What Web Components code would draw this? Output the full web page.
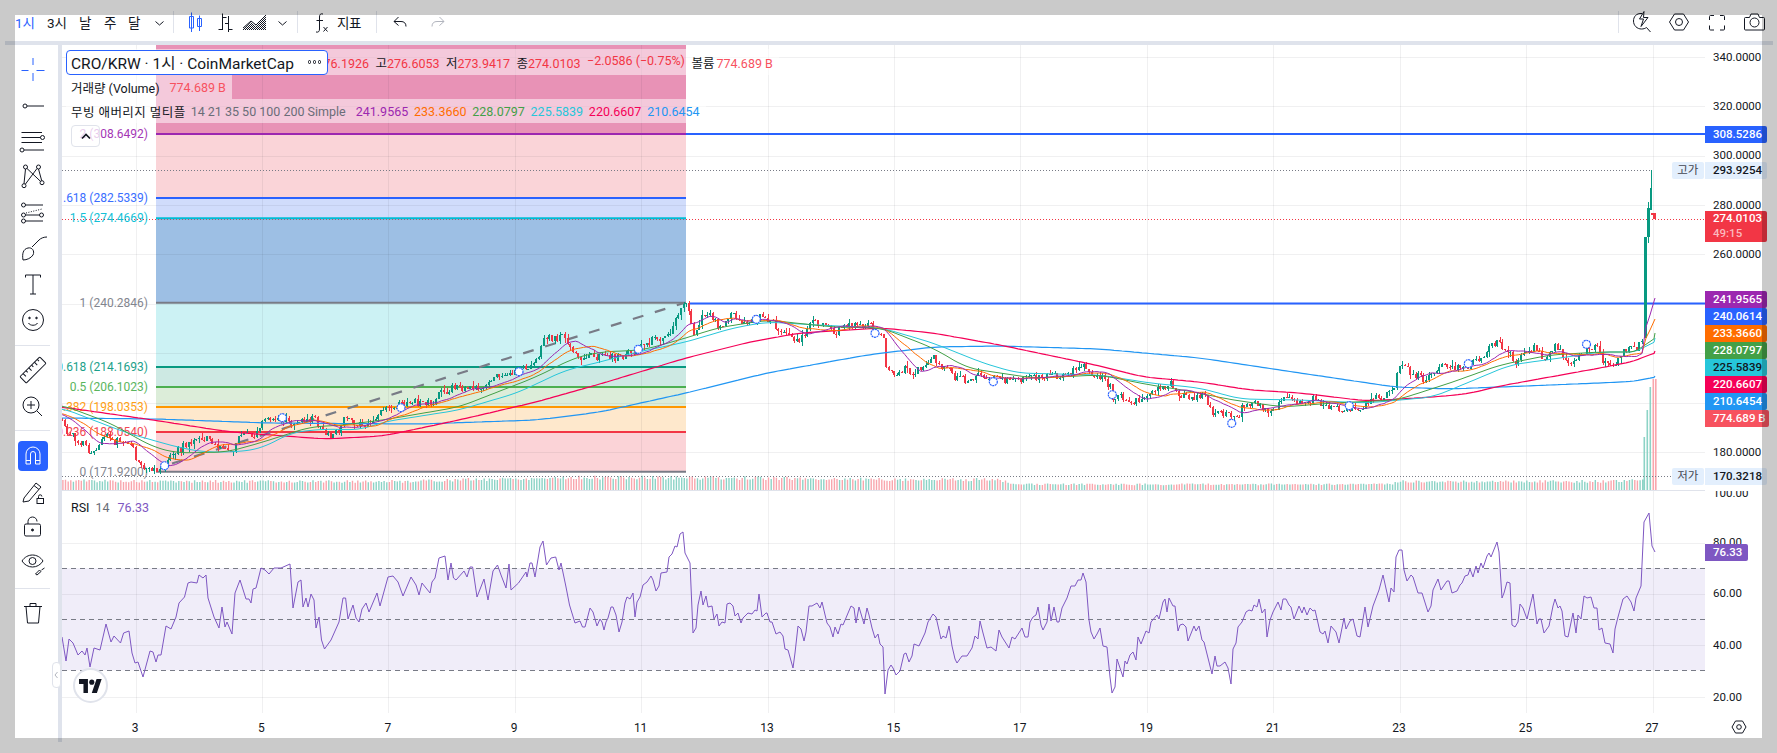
<!DOCTYPE html>
<html lang="ko">
<head>
<meta charset="utf-8">
<title>CRO/KRW</title>
<style>
  html, body { margin: 0; background: #fff; overflow: hidden; }
  body { width: 1777px; height: 753px; font-family: Roboto, "Noto Sans CJK KR", sans-serif; color: #131722; }
</style>
</head>
<body>
<tv-app>
  <tv-topbar slot="top"></tv-topbar>
  <tv-sidebar slot="side"></tv-sidebar>
  <tv-chart slot="chart"><tv-legend></tv-legend></tv-chart>
  <tv-price-axis slot="axis"></tv-price-axis>
  <tv-time-axis slot="time"></tv-time-axis>
  <tv-corner slot="corner"></tv-corner>
</tv-app>
<tv-frame></tv-frame>

<script>
(function (customElements) {
  const FONT = 'Roboto, "Noto Sans CJK KR", sans-serif';

  // price and rsi scales, page pixels
  const priceY = (p) => 56.7 + (340 - p) * 2.47;
  const rsiY = (v) => 696.7 - (v - 20) * 2.57;

  const CLOSE = [[40,412],[62,420],[65,430],[78,440],[92,453],[107,437],[124,445],[132,447],[136,458],[145,470],[159,470],[165,463],[187,443],[207,437],[214,445],[233,452],[237,437],[245,432],[254,437],[264,422],[279,420],[295,423],[312,417],[321,430],[327,437],[339,432],[344,420],[362,425],[377,418],[388,407],[409,403],[432,403],[438,393],[455,388],[475,387],[490,383],[497,373],[509,375],[532,365],[540,353],[543,338],[563,337],[570,348],[578,357],[597,357],[607,357],[620,358],[627,352],[638,349],[643,343],[660,338],[670,332],[680,307],[687,305],[693,335],[697,333],[702,313],[710,315],[720,327],[733,315],[743,325],[757,320],[760,312],[773,323],[787,333],[795,343],[803,337],[810,323],[823,322],[833,333],[850,325],[870,325],[882,338],[885,340],[887,378],[892,367],[897,377],[905,367],[912,375],[922,367],[933,355],[940,365],[950,365],[955,378],[970,379],[980,372],[988,378],[1000,378],[1013,382],[1030,378],[1050,377],[1067,373],[1085,365],[1093,377],[1103,378],[1112,388],[1113,402],[1120,395],[1123,403],[1137,402],[1143,397],[1160,387],[1172,383],[1178,393],[1190,397],[1203,395],[1212,413],[1232,417],[1237,418],[1243,407],[1257,402],[1270,412],[1283,398],[1297,400],[1317,400],[1322,405],[1333,407],[1342,409],[1363,407],[1377,398],[1393,393],[1398,365],[1405,367],[1410,373],[1428,380],[1438,368],[1460,368],[1477,362],[1488,350],[1498,340],[1503,352],[1510,347],[1513,362],[1533,347],[1543,358],[1555,348],[1572,362],[1582,353],[1595,345],[1605,365],[1615,368],[1623,348],[1635,350],[1642,338]];

  const MA_LINES = {
    '#26c6da': [[62,408],[93,420],[127,433],[177,447],[203,452],[233,452],[260,449],[293,432],[327,429],[360,430],[383,422],[459,410],[517,393],[566,370],[600,362],[633,353],[686,342],[733,328],[767,322],[817,325],[882,328],[933,343],[983,363],[1017,373],[1100,375],[1150,383],[1200,388],[1240,399],[1300,400],[1367,403],[1433,397],[1467,383],[1510,365],[1560,358],[1600,352],[1642,352],[1655,338]],
    '#43a047': [[62,405],[110,423],[153,447],[177,453],[227,452],[260,443],[310,427],[343,425],[383,420],[459,407],[536,377],[574,358],[600,352],[643,350],[686,338],[717,328],[767,320],[833,327],[882,328],[933,348],[967,368],[1033,378],[1100,375],[1150,385],[1183,390],[1233,400],[1283,407],[1333,403],[1397,400],[1450,383],[1500,365],[1550,355],[1600,352],[1642,352],[1655,333]],
    '#f50057': [[62,407],[153,420],[230,432],[325,439],[383,436],[459,420],[536,402],[600,384],[686,358],[750,342],[800,333],[882,328],[933,333],[1000,345],[1100,366],[1143,377],[1200,382],[1250,390],[1300,393],[1367,401],[1433,397],[1467,394],[1500,386],[1600,368],[1640,360],[1655,351]],
    '#2196f3': [[62,418],[156,419],[268,423],[421,424],[536,420],[600,412],[686,393],[767,373],[867,355],[933,347],[1000,346],[1100,349],[1200,358],[1300,373],[1395,387],[1450,389],[1500,387],[1600,383],[1640,381],[1655,376]],
  };

  const ALERTS = [[164.6,465.7],[282.4,417.7],[401,407.7],[519,371.7],[638.3,349.3],[756.3,319.3],[875,333.3],[993.3,381.7],[1112.3,394.7],[1231.7,423.3],[1349.3,405.7],[1468.3,363.7],[1586.5,344.3]];

  const RSI = [[62,637],[66,661],[69,639],[73,643],[78,655],[82,651],[85,655],[87,648],[90,667],[94,648],[100,650],[106,624],[111,642],[114,636],[120.5,643],[123.6,633],[129,631],[132,653],[135,663],[138,662],[143,677],[150,651],[153,652],[156,662],[158,655],[161,655],[166,626],[171,629],[176,617],[179,603],[184.5,597],[188,583],[191,582],[197,583],[199,575],[203,578],[206,575],[208,598],[214,617],[219,628],[222,607],[225,627],[227,622],[232,634],[235,593],[240,580],[246,599],[249,599],[251,603],[253,589],[256,588],[261,568],[265,570],[269,574],[274,568],[281,568],[290,564],[293,608],[298,582],[301,580],[303,607],[306,598],[308,607],[311,594],[314,600],[316,628],[319,617],[321.5,640],[324.5,649],[331,640],[339,622],[343,598],[345.6,598],[348,619],[353,605],[356,618],[359,622],[362,609],[366,603],[369,612],[377,593],[380,606],[388,577],[393,576],[398,582],[403,596],[411,577],[416,585],[419,595],[422,583],[430,593],[432,582],[435,578],[439,558],[445,556],[448,580],[451,563],[453.5,578],[456,580],[464,571],[467,577],[470,567],[472.6,567],[477,597],[484,579],[488,600],[493,571],[497.5,565],[501,575],[506,588],[509,564],[511,590],[518.5,583],[526,572],[527,577],[530,563],[532,563],[535,577],[540,547],[543,541],[546.5,565],[551,558],[555.7,557],[559,570],[561,563],[566,587],[569.5,605],[575,623],[580,621],[582.5,627],[585,627],[590,608],[593,612],[597,626],[600,619],[602,622],[604,630],[606,622],[608,618],[611,607],[613,607],[616,615],[619,632],[622,622],[625,603],[627,597],[630,599],[633,593],[635,617],[637,602],[640,597],[643,585],[647,582],[651,576],[653,580],[656,591],[659,586],[661,573],[667,572],[669,557],[672,554],[675,546],[677,547],[680,534],[683,532],[685,553],[690,563],[693,633],[696,628],[698,605],[701,591],[703,605],[706,596],[708,607],[712,606],[714,619],[717,614],[719,626],[722,622],[725,623],[727,604],[730,603],[733,606],[735,616],[738,613],[741,623],[743,618],[748,613],[752,614],[755,610],[757,611],[759,594],[762,617],[766,613],[767,613],[770,622],[772,622],[776,634],[780,632],[783,636],[785,649],[788,650],[793,668],[795,653],[798,626],[801,629],[804,641],[806,632],[809,606],[812,606],[817,603],[820,608],[822,602],[827,623],[830,627],[833,637],[835,627],[838,634],[841,624],[843,625],[851,606],[854,608],[856,623],[859,607],[864,624],[867,608],[869,615],[872,628],[875,638],[878,634],[880,644],[883,647],[885,694],[888,670],[891,665],[893,668],[896,675],[900,671],[904,654],[906,653],[909,662],[912,656],[914,644],[919,646],[925,633],[928,622],[933,614],[936,617],[941,639],[943,636],[946,638],[949,626],[952,646],[955,659],[957,663],[962,656],[967,656],[972,648],[975,636],[978,639],[980,621],[983,633],[987,648],[991,647],[996,651],[999,630],[1002,637],[1009,648],[1012,637],[1015,639],[1022,628],[1025,637],[1028,637],[1030,622],[1033,617],[1036,615],[1038,607],[1041,625],[1043,630],[1047,622],[1049,604],[1051,621],[1054,607],[1057,622],[1059,622],[1062,608],[1067,598],[1071,586],[1075,586],[1078,580],[1081,580],[1083,573],[1086,582],[1089,620],[1091,632],[1094,639],[1097,634],[1100,628],[1103,646],[1107,647],[1110,677],[1112,693],[1115,687],[1117,659],[1123,677],[1125,661],[1127,664],[1130,655],[1133,652],[1136,660],[1138,637],[1141,644],[1146,631],[1149,633],[1151,622],[1157,615],[1159,619],[1163,602],[1165,599],[1167,612],[1169,598],[1173,606],[1175,606],[1178,631],[1180,625],[1183,624],[1186,627],[1188,641],[1194,626],[1196,631],[1199,626],[1202,640],[1204,642],[1212,674],[1215,656],[1217,666],[1220,666],[1225,662],[1228,668],[1231,684],[1233,649],[1236,643],[1238,627],[1242,622],[1246,612],[1249,610],[1252,611],[1254,605],[1257,607],[1259,599],[1262,613],[1265,609],[1267,637],[1270,620],[1273,612],[1278,602],[1281,610],[1283,599],[1286,599],[1289,605],[1291,607],[1294,619],[1299,606],[1302,613],[1304,607],[1307,615],[1310,608],[1313,611],[1315,610],[1318,623],[1320,632],[1323,634],[1325,631],[1328,643],[1331,626],[1336,632],[1339,643],[1344,618],[1346,629],[1350,621],[1353,619],[1357,636],[1360,637],[1365,607],[1368,627],[1373,606],[1379,590],[1383,575],[1389,602],[1391,588],[1394,592],[1396,557],[1399,550],[1402,550],[1404,570],[1407,581],[1411,575],[1413,577],[1418,593],[1422,593],[1428,612],[1431,606],[1433,590],[1438,579],[1441,590],[1447,581],[1449,581],[1452,593],[1457,591],[1460,585],[1462,583],[1465,576],[1468,575],[1470,569],[1473,577],[1476,566],[1478,573],[1481,563],[1483,568],[1487,556],[1489,553],[1491,557],[1497,542],[1499,552],[1502,598],[1504,593],[1507,582],[1510,583],[1512,625],[1515,627],[1518,622],[1520,604],[1523,608],[1527,619],[1533,594],[1537,624],[1539,619],[1541,619],[1544,633],[1549,626],[1553,606],[1555,599],[1558,608],[1560,606],[1562,611],[1565,636],[1568,637],[1573,613],[1576,633],[1578,615],[1581,619],[1584,596],[1587,598],[1591,597],[1594,608],[1597,608],[1599,630],[1602,628],[1605,643],[1610,644],[1613,653],[1615,629],[1618,617],[1623,599],[1627,596],[1631,602],[1634,611],[1636,598],[1641,586],[1644,522],[1649,513],[1652,546],[1655,552]];

  const VOLUME = [[62,10],[156,9],[400,9],[470,11],[560,13],[690,13],[800,12],[900,11],[1000,11],[1010,6],[1100,6],[1390,6],[1400,9],[1600,9],[1635,10],[1642,11]];

  const FIB = [
    { y: 134, c: '#9c27b0', t: '2 (308.6492)' },
    { y: 198, c: '#2962ff', t: '1.618 (282.5339)' },
    { y: 218.3, c: '#00bcd4', t: '1.5 (274.4669)' },
    { y: 302.7, c: '#787b86', t: '1 (240.2846)' },
    { y: 367, c: '#089981', t: '0.618 (214.1693)' },
    { y: 387, c: '#4caf50', t: '0.5 (206.1023)' },
    { y: 407, c: '#ff9800', t: '0.382 (198.0353)' },
    { y: 432, c: '#f23645', t: '0.236 (188.0540)' },
    { y: 471.7, c: '#787b86', t: '0 (171.9200)' },
  ];
  const ZONES = [[45,134,'#e892b6'],[134,198,'#fad4d8'],[198,218.3,'#d0dcfb'],[218.3,302.7,'#9dbfe4'],[302.7,367,'#ccf2f4'],[367,387,'#cde9e3'],[387,407,'#dcedd9'],[407,432,'#fee8cc'],[432,471.7,'#fbd3d7']];

  const interp = (pts, x) => {
    if (x <= pts[0][0]) return pts[0][1];
    for (let i = 1; i < pts.length; i++) {
      if (x <= pts[i][0]) {
        const [x0, y0] = pts[i - 1];
        const [x1, y1] = pts[i];
        return y0 + (y1 - y0) * (x - x0) / (x1 - x0);
      }
    }
    return pts[pts.length - 1][1];
  };

  const rng = (seed) => () => {
    seed = (seed + 0x6d2b79f5) | 0;
    let t = Math.imul(seed ^ (seed >>> 15), 1 | seed);
    t = (t + Math.imul(t ^ (t >>> 7), 61 | t)) ^ t;
    return ((t ^ (t >>> 14)) >>> 0) / 4294967296;
  };

  const buildCandles = () => {
    const rand = rng(77);
    const step = 2.633;
    const list = [];
    const closes = [];
    for (let x = 1642 - step * 640; x < 1643; x += step) {
      closes.push({ x, y: interp(CLOSE, x) + (x < 62 ? 0 : (rand() - 0.5) * 8) });
    }
    for (let i = 1; i < closes.length; i++) {
      const { x, y } = closes[i];
      if (x < 60) continue;
      const open = closes[i - 1].y;
      list.push({
        x, o: open, c: y,
        hi: Math.min(open, y) - rand() * rand() * 6,
        lo: Math.max(open, y) + rand() * rand() * 6,
      });
    }
    return { list, closes };
  };

  const sma = (closes, n) => {
    const out = [];
    for (let i = n; i < closes.length; i++) {
      if (closes[i].x < 60) continue;
      let sum = 0;
      for (let k = 0; k < n; k++) sum += closes[i - k].y;
      out.push([closes[i].x, sum / n]);
    }
    return out;
  };

  const smooth = (pts) => {
    const out = [];
    for (let x = pts[0][0]; x <= pts[pts.length - 1][0]; x += 4) {
      let sum = 0;
      for (let k = -3; k <= 3; k++) sum += interp(pts, x + k * 4);
      out.push([x, sum / 7]);
    }
    out.push(pts[pts.length - 1]);
    return out;
  };

  const toPath = (pts) => 'M' + pts.map((p) => p[0].toFixed(1) + ' ' + p[1].toFixed(1)).join('L');

  const chartSvg = () => {
    const { list, closes } = buildCandles();
    const rand = rng(5);
    let greenBody = '', redBody = '', greenVol = '', redVol = '';
    list.forEach((b) => {
      const x = Math.round(b.x);
      const top = Math.min(b.o, b.c);
      const bot = Math.max(Math.max(b.o, b.c), top + 1);
      const seg = `M${x} ${b.hi.toFixed(1)}h1V${b.lo.toFixed(1)}h-1zM${x - 1} ${top.toFixed(1)}h2V${bot.toFixed(1)}h-2z`;
      const h = interp(VOLUME, b.x) * (0.8 + rand() * 0.3);
      const vol = `M${b.x.toFixed(1)} ${(490 - h).toFixed(1)}h1.4V490h-1.4z`;
      if (b.c <= b.o) { greenBody += seg; greenVol += vol; } else { redBody += seg; redVol += vol; }
    });
    // the last hours are read bar by bar
    greenBody += 'M1644 237h3V338h-3zM1647 208h3V237h-3zM1648 202h1V243h-1zM1650 188h2V210h-2zM1650.5 170h1V190h-1z';
    redBody += 'M1651 213h4v2h-4zM1653 213h2.5v6h-2.5z';
    greenVol += 'M1643.5 437h1.6V490h-1.6zM1646.5 410h1.6V490h-1.6zM1649.5 387h1.6V490h-1.6z';
    redVol += 'M1652.5 379h1.6V490h-1.6zM1655 379h1.6V490h-1.6z';

    const purple = sma(closes, 14);
    const orange = sma(closes, 21);
    purple.push([1646, 327], [1650, 315], [1655, 298]);
    orange.push([1646, 338], [1650, 330], [1655, 319]);

    let grid = '';
    for (let x = 135.5; x < 1700; x += 126.42) {
      grid += `<path d="M${Math.round(x) + 0.5} 45V713"/>`;
    }
    [340, 320, 300, 280, 260, 240, 220, 200, 180].forEach((p) => {
      grid += `<path d="M62 ${Math.round(priceY(p)) + 0.5}H1705"/>`;
    });
    [80, 60, 40, 20].forEach((v) => {
      grid += `<path d="M62 ${Math.round(rsiY(v)) + 0.5}H1705"/>`;
    });

    return `
    <svg xmlns="http://www.w3.org/2000/svg" width="1643" height="668" viewBox="62 45 1643 668">
      ${ZONES.map((z) => `<rect x="156" y="${z[0]}" width="530" height="${z[1] - z[0]}" fill="${z[2]}"/>`).join('')}
      <rect x="62" y="568.3" width="1643" height="102" fill="#f0edf9"/>
      <g stroke="rgba(42,46,57,.07)" stroke-width="1" fill="none">${grid}</g>
      <path d="M62 490.5H1705" stroke="#e0e3eb"/>
      <path d="${greenVol}" fill="#8cd3c6"/>
      <path d="${redVol}" fill="#f9a6ad"/>
      <path d="M62 170.5H1650M62 476.5H1705" stroke="#787b86" stroke-dasharray="1 2" fill="none"/>
      <path d="M62 219.5H1705" stroke="#f23645" stroke-dasharray="1 2" fill="none"/>
      <g stroke-width="2" fill="none">
        ${FIB.map((f) => `<path d="M156 ${f.y}H686" stroke="${f.c}"/>`).join('')}
        <path d="M686 134H1705M690 303.5H1705" stroke="#2962ff"/>
      </g>
      <g font-family='${FONT}' font-size="12" text-anchor="end">
        ${FIB.map((f) => `<text x="148" y="${f.y + 4}" fill="${f.c}" opacity=".92">${f.t}</text>`).join('')}
      </g>
      <path d="M172 463.5L684 303" stroke="#787b86" stroke-width="2.2" stroke-dasharray="11 12" fill="none"/>
      <g shape-rendering="crispEdges">
        <path d="${greenBody}" fill="#089981"/>
        <path d="${redBody}" fill="#f23645"/>
      </g>
      <g fill="none" stroke-width="1" stroke-linejoin="round">
        <path d="${toPath(smooth(MA_LINES['#2196f3']))}" stroke="#2196f3" stroke-width="1.2"/>
        <path d="${toPath(smooth(MA_LINES['#f50057']))}" stroke="#f50057" stroke-width="1.2"/>
        <path d="${toPath(smooth(MA_LINES['#26c6da']))}" stroke="#26c6da"/>
        <path d="${toPath(smooth(MA_LINES['#43a047']))}" stroke="#43a047"/>
        <path d="${toPath(orange)}" stroke="#ff6d00"/>
        <path d="${toPath(purple)}" stroke="#9c27b0"/>
      </g>
      ${ALERTS.map((a) => `<circle cx="${a[0]}" cy="${a[1]}" r="4" fill="#fff" stroke="#2962ff" stroke-width="1.2" stroke-dasharray="2 .6"/>`).join('')}
      <path d="M62 568.5H1705M62 619.5H1705M62 670.5H1705" stroke="#787b86" stroke-dasharray="5 4" fill="none"/>
      <path d="${toPath(RSI)}" fill="none" stroke="#7e57c2" stroke-width="1" stroke-linejoin="round"/>
    </svg>`;
  };

  class TvApp extends HTMLElement {
    connectedCallback() {
      this.attachShadow({ mode: 'open' }).innerHTML = `
      <style>
        :host { display: block; width: 1777px; height: 753px; padding-top: 15px; box-sizing: border-box; font-family: ${FONT}; }
        .top { margin-left: 15px; }
        .band { height: 4px; margin: 0 4px 0 5px; background: #dfe3ec; }
        .row { display: flex; margin-left: 15px; height: 693px; }
        .side { width: 43px; }
        .vband { width: 4px; height: 697px; background: #dfe3ec; }
        .main { display: grid; grid-template-columns: 1643px 62px; grid-template-rows: 668px 25px; }
      </style>
      <div class="top"><slot name="top"></slot></div>
      <div class="band"></div>
      <div class="row">
        <div class="side"><slot name="side"></slot></div>
        <div class="vband"></div>
        <div class="main">
          <slot name="chart"></slot>
          <slot name="axis"></slot>
          <slot name="time"></slot>
          <slot name="corner"></slot>
        </div>
      </div>`;
    }
  }

  class TvTopbar extends HTMLElement {
    connectedCallback() {
      const chev = (ml) => `<svg style="margin-left:${ml}px" width="9" height="26" viewBox="0 0 9 26" fill="none" stroke="#131722"><path d="M.5 6.5l4 3.5 4-3.5"/></svg>`;
      const icon = (ml, w, body) => `<svg style="margin-left:${ml}px" width="${w}" height="26" viewBox="0 0 ${w} 26" fill="none" stroke="#131722">${body}</svg>`;
      this.attachShadow({ mode: 'open' }).innerHTML = `
      <style>
        :host { display: flex; align-items: flex-start; height: 26px; width: 1750px; font: 13.5px ${FONT}; color: #131722; white-space: nowrap; }
        .cell { display: block; line-height: 26px; margin-top: -5px; }
        svg { display: block; flex: none; overflow: visible; }
        .sep { width: 1px; height: 22px; background: #e0e3eb; margin-top: -4px; flex: none; }
        .active { color: #2962ff; }
      </style>
      <span class="cell active" style="width:18px">1시</span>
      <span class="cell" style="margin-left:14px;width:19px">3시</span>
      <span class="cell" style="margin-left:13px;width:13px">날</span>
      <span class="cell" style="margin-left:12px;width:13px">주</span>
      <span class="cell" style="margin-left:11px;width:13px">달</span>
      ${chev(14)}
      <div class="sep" style="margin-left:9px"></div>
      ${icon(14, 16, '<path stroke="#2962ff" d="M3.5-2.5V17M11.5 .5V16M1.5 1.5h4v11.5h-4zM9.5 3.5h4v8h-4z"/>')}
      ${icon(14, 15, '<path d="M4.5-1.5v16.5M.5 14.5h4M4.5 2.5h4M10.5 1v16M7 8.5h3.5M10.5 14.5H14.5"/>')}
      ${icon(10, 23, `<defs><pattern id="hatch" width="2" height="2" patternUnits="userSpaceOnUse"><path d="M0 0h1v1H0zM1 1h1v1H1z" fill="#131722" stroke="none"/></pattern></defs><path d="M0 14l8-7 5 4 10-10v14H0z" fill="url(#hatch)" stroke="none"/><path d="M0 13l8-7 5 4 10-10"/>`)}
      ${chev(12)}
      <div class="sep" style="margin-left:10px"></div>
      ${icon(16, 14, '<path d="M9 -1C6.5 -1.7 5.5 -.5 5.5 2v12c0 2.5-1 3.5-3.5 3M2.5 5.500H9M9.5 12l4 4.5M13.5 12l-4 4.5"/>')}
      <span class="cell" style="margin-left:9px;width:25px;letter-spacing:-.5px">지표</span>
      <div class="sep" style="margin-left:14px"></div>
      ${icon(16, 14, '<path d="M5.5 2L1 6.5l4.5 4M1 6.5h7c3 0 5 1.5 5 5"/>')}
      ${icon(24, 14, '<path stroke="#b2b5be" d="M8.5 2L13 6.5l-4.5 4M13 6.5H6c-3 0-5 1.500-5 5"/>')}
      <div class="sep" style="margin-left:auto"></div>
      ${icon(14, 18, '<path d="M9 -1.500C3 -2 .5 2 .5 6c0 4.5 3.5 8 8 8 2 0 3.500-.5 5-1.500M13.5 12.5L17.5 17M11-3.500L6.5 4h4L8 11.500l7-9h-4.500z"/>')}
      ${icon(18, 20, '<path d="M5.5-1h9l5 8-5 8h-9l-5-8z"/><circle cx="10" cy="7" r="3.5"/>')}
      ${icon(20, 16, '<path d="M.5 5V1.500a1 1 0 0 1 1-1H5M11 .5h3.500a1 1 0 0 1 1 1V5M15.500 10.500V14a1 1 0 0 1-1 1H11M5 15H1.500a1 1 0 0 1-1-1v-3.500"/>')}
      ${icon(19, 21, '<path d="M.5 3.500a1 1 0 0 1 1-1h4L7-1h7l1.500 3.500h4a1 1 0 0 1 1 1v10.500a1 1 0 0 1-1 1h-18a1 1 0 0 1-1-1z"/><circle cx="10.5" cy="7.5" r="4.5"/>')}
      `;
    }
  }

  const TOOLS = [
    `<path stroke="#2962ff" d="M3.5 15.5h7M18.5 15.5h8M15 3v7M15 18v8"/>`,
    `<circle cx="7" cy="15" r="2"/><path d="M9 15h17"/>`,
    `<path d="M3.5 6.5H24M3.5 11.5H22.5M3.5 16.5H24M6 24H26"/><circle cx="24.5" cy="11.5" r="2"/><circle cx="4" cy="24" r="2"/>`,
    `<path d="M7.5 7L6 21.7M9 6.5L22.7 19.5M19 6.500L7.5 22M20.5 7L23.7 18.7"/><circle cx="7.5" cy="5" r="2"/><circle cx="20.5" cy="5" r="2"/><circle cx="24" cy="20.7" r="2"/><circle cx="6" cy="23.7" r="2"/>`,
    `<path d="M7.5 7H25M7.5 17H21.500M7.5 23H25"/><path d="M8 15L24 11" stroke-dasharray="1 1.5"/><circle cx="5.5" cy="7" r="2"/><circle cx="5.5" cy="17" r="2"/><circle cx="23.5" cy="17" r="2"/><circle cx="5.5" cy="23" r="2"/>`,
    `<path d="M5 27c-1-6 0-11 5-12 4-1 7 3 5 7-2 3-6 5-10 5zM14 14l7-7c2-2 5-3 8-3"/>`,
    `<path d="M7.5 8.5V6h15v2.5M15 6v19M12 25h6"/>`,
    `<circle cx="15" cy="15" r="10.5"/><circle cx="11.5" cy="13" r=".8" fill="#131722"/><circle cx="18.5" cy="13" r=".8" fill="#131722"/><path d="M10.5 18c1.5 3 7.5 3 9 0"/>`,
    'sep',
    `<g transform="rotate(-45 15 15)"><rect x="1" y="10.5" width="28" height="9" rx="1"/><path d="M5.5 10.5v4M9.5 10.5v2.5M13.5 10.5v4M17.5 10.5v2.5M21.5 10.5v4M25.5 10.5v2.5"/></g>`,
    `<circle cx="13" cy="14" r="8"/><path d="M13 10v8M9 14h8M19 20l5 5"/>`,
    'sep',
    'magnet',
    `<path d="M6 22L18 7l5 4-12 14-6 1zM16 9.5l5 4"/><rect x="19" y="22.5" width="6.5" height="5" fill="#fff"/><path d="M20.5 22.5v-2a1.7 1.7 0 0 1 3.4 0"/>`,
    `<rect x="6.5" y="12" width="16" height="12" rx="1.5"/><path d="M10 12V9.5a4.5 4.5 0 0 1 9 0"/><circle cx="14.5" cy="18" r="1" fill="#131722"/>`,
    `<path d="M4 13c5-8 16-8 21 0-5 8-16 8-21 0z"/><circle cx="14.5" cy="13" r="3.5"/><path d="M17.5 26l4-4 1.5 1.5-4 3.5zM23.5 22l3-2"/>`,
    'sep',
    `<path d="M6 8.500h18M12 8.500V5.500h6v3M8 8.500l1.500 16.500h11L22 8.500"/>`,
  ];

  class TvSidebar extends HTMLElement {
    connectedCallback() {
      const rows = TOOLS.map((t) => {
        if (t === 'sep') return '<div class="sep"></div>';
        if (t === 'magnet') {
          return `<div class="tool"><div class="on"><svg width="30" height="30" viewBox="0 0 30 30" fill="none" stroke="#fff"><path d="M8 23V13a7 7 0 0 1 14 0v10h-4.5V13a2.5 2.5 0 0 0-5 0v10zM8 19.5h4.5M17.5 19.5H22"/></svg></div></div>`;
        }
        return `<div class="tool"><svg width="30" height="30" viewBox="0 0 30 30" fill="none" stroke="#131722">${t}</svg></div>`;
      }).join('');
      this.attachShadow({ mode: 'open' }).innerHTML = `
      <style>
        :host { display: block; padding-top: 7px; box-sizing: border-box; }
        .tool { height: 35.7px; display: flex; align-items: center; padding-left: 2.5px; }
        .sep { height: 1px; width: 35px; background: #e0e3eb; margin: 7px 0 6.5px; }
        .on { width: 30px; height: 30px; background: #2962ff; border-radius: 4px; }
        svg { display: block; overflow: visible; }
      </style>${rows}`;
    }
  }

  class TvChart extends HTMLElement {
    connectedCallback() {
      this.attachShadow({ mode: 'open' }).innerHTML = `
      <style>
        :host { display: block; position: relative; width: 1643px; height: 668px; }
        svg { display: block; }
        .overlay { position: absolute; left: 0; top: 0; right: 0; bottom: 0; }
        .rsi { position: absolute; left: 9px; top: 454px; font-size: 12.5px; line-height: 17px; color: #131722; white-space: pre; }
        .rsi i { font-style: normal; color: #6a6d78; margin-left: 6px; }
        .rsi b { font-weight: 400; color: #7e57c2; margin-left: 8px; }
        .handle { position: absolute; left: -10px; top: 617px; width: 7px; height: 24px; background: #fff; border: 1px solid #e0e3eb; border-radius: 4px; }
        .logo { position: absolute; left: 11px; top: 623px; width: 31px; height: 31px; background: #fff; border: 2px solid #e0e3eb; border-radius: 50%; display: flex; align-items: center; justify-content: center; }
      </style>
      ${chartSvg()}
      <div class="overlay"><slot></slot></div>
      <div class="rsi">RSI<i>14</i><b>76.33</b></div>
      <div class="handle"><svg width="7" height="24" viewBox="0 0 7 24" fill="none" stroke="#b2b5be"><path d="M4.5 9L2 12l2.5 3"/></svg></div>
      <div class="logo"><svg width="23" height="18" viewBox="0 0 36 28" fill="#131722"><path d="M14 25H7V11H0V3h14zM28 25h-8l7.5-22h8z"/><circle cx="20" cy="8" r="4"/></svg></div>`;
    }
  }

  class TvLegend extends HTMLElement {
    connectedCallback() {
      this.attachShadow({ mode: 'open' }).innerHTML = `
      <style>
        :host { display: inline-flex; flex-direction: column; align-items: flex-start; margin: 4px 0 0 4px; font: 12.5px ${FONT}; color: #131722; white-space: nowrap; }
        .row { display: flex; align-items: center; height: 24px; background: rgba(255,255,255,.5); padding: 0 6px 0 5px; }
        .first { height: 26px; padding: 0 6px 0 0; }
        .title { position: relative; z-index: 1; box-sizing: border-box; width: 262px; height: 25px; display: flex; align-items: center; justify-content: space-between; padding: 0 6px 0 4px; border: 1px solid #2962ff; border-radius: 4px; background: #fff; font-size: 15.5px; }
        .dots { display: flex; gap: 1.5px; }
        .dots i { width: 3.5px; height: 3.5px; border: 1px solid #131722; border-radius: 50%; box-sizing: border-box; }
        .ohlc { margin-left: -23px; display: flex; gap: 6.5px; }
        .red { color: #f23645; }
        .name { letter-spacing: .45px; }
        .gray { color: #6a6d78; margin-left: 5px; }
        .vol { color: #f7525f; margin-left: 10px; }
        .val { margin-left: 5.8px; }
        .collapse { box-sizing: border-box; width: 29px; height: 22px; margin: 2px 0 0 5px; background: rgba(255,255,255,.75); border: 1px solid #e0e3eb; border-radius: 4px; display: flex; align-items: center; justify-content: center; }
      </style>
      <div class="row first">
        <div class="title"><span>CRO/KRW · 1시 · CoinMarketCap</span><span class="dots"><i></i><i></i><i></i></span></div>
        <div class="ohlc">
          <span>시<span class="red">276.1926</span></span>
          <span>고<span class="red">276.6053</span></span>
          <span>저<span class="red">273.9417</span></span>
          <span>종<span class="red">274.0103</span></span>
          <span class="red">−2.0586 (−0.75%)</span>
          <span>볼륨<span class="vol" style="margin-left:2px">774.689 B</span></span>
        </div>
      </div>
      <div class="row"><span>거래량 (Volume)</span><span class="vol">774.689 B</span></div>
      <div class="row">
        <span class="name">무빙 애버리지 멀티플</span><span class="gray">14 21 35 50 100 200 Simple</span>
        <span class="val" style="color:#9c27b0;margin-left:10px">241.9565</span>
        <span class="val" style="color:#ff6d00">233.3660</span>
        <span class="val" style="color:#43a047">228.0797</span>
        <span class="val" style="color:#26c6da">225.5839</span>
        <span class="val" style="color:#f50057">220.6607</span>
        <span class="val" style="color:#2196f3">210.6454</span>
      </div>
      <div class="collapse"><svg width="12" height="8" viewBox="0 0 12 8" fill="none" stroke="#131722" stroke-width="1.7"><path d="M2 6.5l4-4 4 4"/></svg></div>`;
    }
  }

  class TvPriceAxis extends HTMLElement {
    connectedCallback() {
      const top = (y) => y - 45;
      const ticks = [[340, 56.7], [320, 106], [300, 155.3], [280, 205], [260, 253.5], [180, 451.7]]
        .map(([p, y]) => `<div class="tick" style="top:${top(y) - 8}px">${p.toFixed(4)}</div>`).join('');
      const rsiTicks = [[100, 492.6], [80, 542.3], [60, 593.3], [40, 645.3], [20, 696.7]]
        .map(([v, y]) => `<div class="tick" style="top:${y - 491 - 8}px">${v.toFixed(2)}</div>`).join('');
      const tag = (y, bg, text, color = '#fff', w = 62) =>
        `<div class="tag" style="top:${top(y)}px;background:${bg};color:${color};width:${w}px">${text}</div>`;
      this.attachShadow({ mode: 'open' }).innerHTML = `
      <style>
        :host { display: block; position: relative; width: 62px; height: 668px; font: 11.5px ${FONT}; color: #131722; white-space: nowrap; }
        .pane { position: absolute; left: 0; right: 0; overflow: hidden; }
        .rsi { top: 446px; height: 222px; }
        .tick { position: absolute; left: 8px; line-height: 17px; }
        .tag { position: absolute; left: 0; box-sizing: border-box; padding-left: 8px; height: 17px; line-height: 17px; border-radius: 0 2px 2px 0; font-weight: 500; }
        .side { position: absolute; left: -33px; box-sizing: border-box; width: 31.5px; height: 17px; line-height: 17px; text-align: center; background: #e3effd; border-radius: 2px; color: #434651; }
        .tall { height: 31px; line-height: 15px; }
        .tall i { display: block; font-style: normal; color: #fbb9be; }
        .rsi-tag { position: absolute; left: 0; top: ${544 - 491}px; width: 43px; height: 17px; line-height: 17px; box-sizing: border-box; padding-left: 8px; background: #7e57c2; color: #fff; border-radius: 0 2px 2px 0; font-weight: 500; }
      </style>
      ${ticks}
      ${tag(126, '#2962ff', '308.5286')}
      ${tag(162, '#e3effd', '293.9254', '#131722').replace('font-weight', 'x')}
      <div class="side" style="top:${top(162)}px">고가</div>
      <div class="tag tall" style="top:${top(211)}px;background:#f23645;color:#fff;width:62px">274.0103<i>49:15</i></div>
      ${tag(291, '#9c27b0', '241.9565')}
      ${tag(308, '#2962ff', '240.0614')}
      ${tag(325, '#ff6d00', '233.3660')}
      ${tag(342, '#43a047', '228.0797')}
      ${tag(359, '#26c6da', '225.5839', '#131722')}
      ${tag(376, '#f50057', '220.6607')}
      ${tag(393, '#2196f3', '210.6454')}
      ${tag(410, '#f7525f', '774.689 B', '#fff', 64)}
      ${tag(468, '#e3effd', '170.3218', '#131722')}
      <div class="side" style="top:${top(468)}px">저가</div>
      <div class="pane rsi">${rsiTicks}<div class="rsi-tag">76.33</div></div>`;
    }
  }

  class TvTimeAxis extends HTMLElement {
    connectedCallback() {
      const labels = [3, 5, 7, 9, 11, 13, 15, 17, 19, 21, 23, 25, 27].map((d) => `<span>${d}</span>`).join('');
      this.attachShadow({ mode: 'open' }).innerHTML = `
      <style>
        :host { display: flex; height: 25px; padding-left: 9.8px; font: 12px ${FONT}; color: #131722; overflow: hidden; }
        span { flex: 0 0 126.42px; text-align: center; line-height: 30px; }
      </style>${labels}`;
    }
  }

  class TvCorner extends HTMLElement {
    connectedCallback() {
      this.attachShadow({ mode: 'open' }).innerHTML = `
      <style>
        :host { display: flex; height: 25px; padding: 7px 0 0 26px; box-sizing: border-box; }
      </style>
      <svg width="16" height="14" viewBox="0 0 16 14" fill="none" stroke="#131722"><path d="M4.5 1h7L15 7l-3.5 6h-7L1 7z"/><circle cx="8" cy="7" r="2.3"/></svg>`;
    }
  }

  // screenshot grey sits over the page edge, the tags show through it
  class TvFrame extends HTMLElement {
    connectedCallback() {
      this.attachShadow({ mode: 'open' }).innerHTML = `
      <style>
        :host { position: fixed; left: 0; top: 0; width: 1777px; height: 753px; box-sizing: border-box; border: 15px solid rgba(0,0,0,.208); pointer-events: none; }
      </style>`;
    }
  }

  customElements.define('tv-app', TvApp);
  customElements.define('tv-topbar', TvTopbar);
  customElements.define('tv-sidebar', TvSidebar);
  customElements.define('tv-chart', TvChart);
  customElements.define('tv-legend', TvLegend);
  customElements.define('tv-price-axis', TvPriceAxis);
  customElements.define('tv-time-axis', TvTimeAxis);
  customElements.define('tv-corner', TvCorner);
  customElements.define('tv-frame', TvFrame);
})(window.customElements);
</script>
</body>
</html>
